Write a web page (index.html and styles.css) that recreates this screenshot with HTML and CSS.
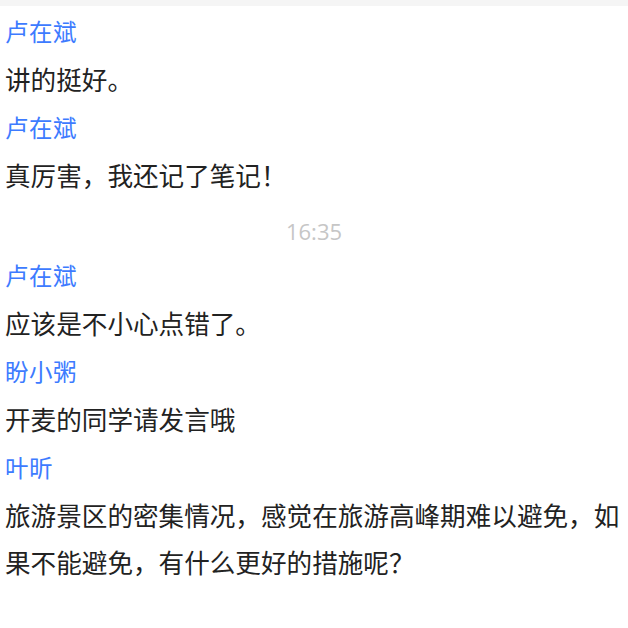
FILE: index.html
```html
<!doctype html>
<html lang="zh-CN">
<head>
    <title>聊天记录</title>
    <meta charset="utf-8" />
    <meta name="viewport" content="width=device-width, initial-scale=1.0" />
    <link rel="stylesheet" href="styles.css">
</head>
<body>
    <!-- top strip -->
    <div class="top-bar"></div>

    <!-- message list -->
    <div class="chat-list">
        <div class="msg">
            <div class="msg-name">卢在斌</div>
            <div class="msg-text">讲的挺好。</div>
        </div>
        <div class="msg">
            <div class="msg-name">卢在斌</div>
            <div class="msg-text">真厉害，我还记了笔记！</div>
        </div>

        <div class="msg-time">16:35</div>

        <div class="msg">
            <div class="msg-name">卢在斌</div>
            <div class="msg-text">应该是不小心点错了。</div>
        </div>
        <div class="msg">
            <div class="msg-name">盼小粥</div>
            <div class="msg-text">开麦的同学请发言哦</div>
        </div>
        <div class="msg">
            <div class="msg-name">叶昕</div>
            <div class="msg-text">旅游景区的密集情况，感觉在旅游高峰期难以避免，如果不能避免，有什么更好的措施呢？</div>
        </div>
    </div>
</body>
</html>
```

FILE: styles.css
```css
body {
    margin: 0;
    background-color: #fff;
    font-family: 'Noto Sans CJK SC', 'Noto Sans', sans-serif;
    overflow: hidden;
}

.top-bar {
    height: 6px;
    background-color: #f5f5f5;
}

.chat-list {
    padding: 0 0 0 5px;
}

/* one message */
.msg {
    padding-top: 10px;
}

.msg-name {
    font-size: 23.5px;
    letter-spacing: 0.5px;
    line-height: 30px;
    color: #3d7bff;
}

.msg-text {
    margin-top: 9px;
    font-size: 25.6px;
    line-height: 47px;
    color: #222;
}

/* time divider */
.msg-time {
    padding: 16px 5px 2px 0;
    text-align: center;
    font-family: 'Open Sans', 'Noto Sans', sans-serif;
    font-size: 22px;
    line-height: 34px;
    color: #c6c6c6;
}
```
